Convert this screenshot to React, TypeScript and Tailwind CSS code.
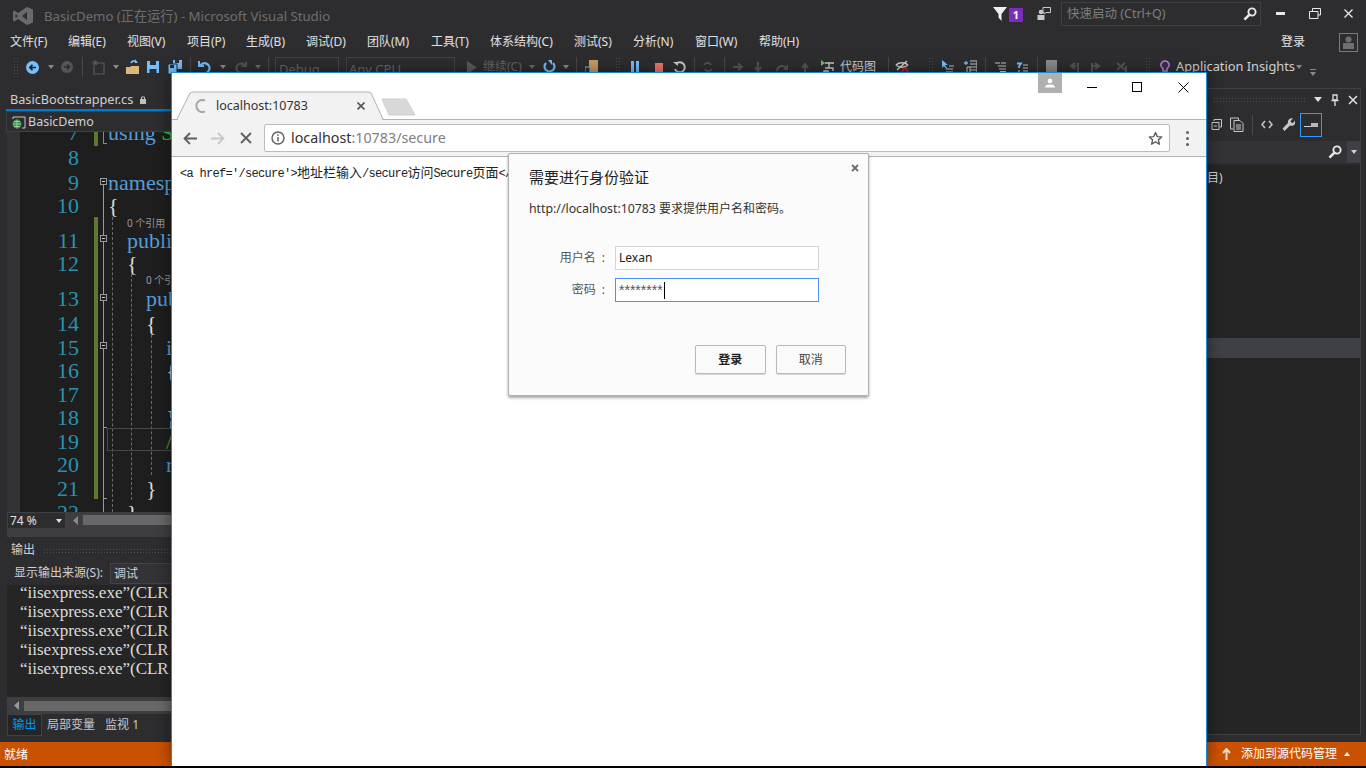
import React from "react";

const Ic = ({ c, v, children }: { c: string; v: string; children: React.ReactNode }) => (
  <svg className={"flex-none " + c} viewBox={v} fill="none">{children}</svg>
);
const Tri = ({ c, f = "#8a8a8a", up }: { c: string; f?: string; up?: boolean }) => (
  <svg className={"flex-none w-[6px] h-[4px] " + c} viewBox="0 0 6 4"><polygon points={up ? "0,4 6,4 3,0" : "0,0 6,0 3,4"} fill={f} /></svg>
);
const Sep = ({ c }: { c: string }) => <div className={"flex-none w-px h-[20px] bg-[#47474b] " + c} />;
const Grip = ({ c }: { c: string }) => (
  <div className={"flex-none w-[5px] h-[20px] bg-[radial-gradient(circle,#4e4e52_0.8px,transparent_1px)] bg-[length:3px_3px] " + c} />
);
const Under = ({ c }: { c: string }) => <div className={"flex-none self-end w-[6px] h-[2px] mb-[0px] bg-[#8a8a8a] " + c} />;

const Mag = ({ c }: { c: string }) => (
  <Ic c={c} v="0 0 14 14">
    <circle cx="9" cy="5" r="3.6" stroke="#e8e8e8" strokeWidth="1.9" />
    <path d="M6.2 7.8 1.4 12.6" stroke="#e8e8e8" strokeWidth="2.6" />
  </Ic>
);

const Toolbar = () => (
  <div className="flex items-start h-[36px] pt-[3px] flex-none">
    <div className="flex items-center h-[20px] text-[13px] whitespace-nowrap">
      <Grip c="ml-[13px]" />
      <Ic c="w-[13px] h-[13px] ml-[8px]" v="0 0 13 13"><circle cx="6.5" cy="6.5" r="6.5" fill="#75beff" /><path d="M10 6.5H4M6.5 3.8 3.8 6.5l2.7 2.7" stroke="#1e1e1e" strokeWidth="1.7" /></Ic>
      <Tri c="ml-[9px]" />
      <Ic c="w-[12px] h-[12px] ml-[7px]" v="0 0 13 13"><circle cx="6.5" cy="6.5" r="6.5" fill="#555558" /><path d="M3 6.5h6M6.5 3.8l2.7 2.7-2.7 2.7" stroke="#2d2d30" strokeWidth="1.7" /></Ic>
      <Sep c="ml-[9px]" />
      <Ic c="w-[14px] h-[15px] ml-[8px]" v="0 0 14 15"><path d="M5 3h8v11H3V6" stroke="#5a5a5d" strokeWidth="1.2" /><path d="M4 0v6M1 3h6M2 1l4 4M6 1 2 5" stroke="#5a5a5d" /></Ic>
      <Tri c="ml-[8px]" />
      <Ic c="w-[15px] h-[16px] ml-[6px]" v="0 0 15 16"><path d="M1 8h4l1-1h8v8H1z" fill="#dcb67a" /><path d="M6 4a3 3 0 0 1 5-1" stroke="#75beff" strokeWidth="1.8" /><path d="M10 0v4h3" fill="#75beff" /></Ic>
      <Ic c="w-[12px] h-[12px] ml-[7px]" v="0 0 12 12"><path d="M0 0h12v12H0z" fill="#75beff" /><path d="M3 0h6v4H3zM2.5 8h7v4h-7z" fill="#2d2d30" /></Ic>
      <Ic c="w-[14px] h-[14px] ml-[9px]" v="0 0 14 14"><path d="M5 0h9v9H5z" fill="#75beff" /><path d="M7 0h4v3H7z" fill="#2d2d30" /><path d="M0 4h9v10H0z" fill="#75beff" stroke="#2d2d30" /><path d="M2 5h4v3H2z" fill="#2d2d30" /></Ic>
      <Sep c="ml-[8px]" />
      <Ic c="w-[14px] h-[14px] ml-[7px]" v="0 0 14 14"><path d="M1 1v5h5" stroke="#75beff" strokeWidth="2" /><path d="M2 6a5 5 0 1 1 3 7" stroke="#75beff" strokeWidth="2.2" /></Ic>
      <Tri c="ml-[8px]" />
      <Ic c="w-[13px] h-[14px] ml-[8px]" v="0 0 14 14"><path d="M13 1v5H8" stroke="#555558" strokeWidth="2" /><path d="M12 6a5 5 0 1 0-3 7" stroke="#555558" strokeWidth="2.2" /></Ic>
      <Tri c="ml-[8px]" f="#6a6a6a" />
      <Sep c="ml-[7px]" />
      <div className="flex-none ml-[6px] w-[64px] h-[20px] border border-[#434346] pl-[3px] text-[#656565] leading-[22px]">Debug</div>
      <div className="flex-none ml-[7px] w-[109px] h-[20px] border border-[#434346] pl-[2px] text-[#656565] leading-[22px]">Any CPU</div>
      <Ic c="w-[10px] h-[13px] ml-[12px]" v="0 0 10 13"><path d="M0 0l10 6.5L0 13z" fill="#5a5a5d" /></Ic>
      <div className="flex-none ml-[6px] w-[39px] text-[#656565] text-[12px]">继续(C)</div>
      <Tri c="ml-[7px]" f="#6a6a6a" />
      <Ic c="w-[13px] h-[14px] ml-[8px]" v="0 0 13 14"><path d="M3 3a5 5 0 1 0 7 0" stroke="#75beff" strokeWidth="2.2" /><path d="M5 0h4v5z" fill="#75beff" /></Ic>
      <Tri c="ml-[7px]" />
      <Sep c="ml-[7px]" />
      <Ic c="w-[13px] h-[14px] ml-[8px]" v="0 0 13 14"><path d="M4 0h9v14H4z" fill="#c79b5f" /><path d="M0 7h5v7H0z" fill="#2d2d30" stroke="#75beff" /></Ic>
      <Under c="ml-[6px]" />
      <Grip c="ml-[5px]" />
      <Ic c="w-[8px] h-[12px] ml-[11px]" v="0 0 8 12"><path d="M0 0h3v12H0zM5 0h3v12H5z" fill="#75beff" /></Ic>
      <div className="flex-none w-[8px] h-[9px] ml-[16px] bg-[#e8776a]" />
      <Ic c="w-[13px] h-[13px] ml-[10px]" v="0 0 13 13"><path d="M3 3a5 5 0 1 1-1 5" stroke="#c8c8c8" strokeWidth="2" /><path d="M0 1h5v4z" fill="#c8c8c8" /></Ic>
      <Sep c="ml-[8px]" />
      <Ic c="w-[12px] h-[12px] ml-[7px]" v="0 0 12 12"><path d="M2 4a4 4 0 0 1 7 0M10 8a4 4 0 0 1-7 0" stroke="#555558" strokeWidth="1.8" /></Ic>
      <Sep c="ml-[10px]" />
      <Ic c="w-[10px] h-[10px] ml-[8px]" v="0 0 10 10"><path d="M0 5h8M5 1.500 9 5l-4 3.500" stroke="#555558" strokeWidth="2" /></Ic>
      <Ic c="w-[8px] h-[11px] ml-[11px]" v="0 0 8 11"><path d="M4 0v8M1 5l3 4 3-4" stroke="#555558" strokeWidth="2" /></Ic>
      <Ic c="w-[12px] h-[9px] ml-[14px]" v="0 0 12 9"><path d="M1 8a5 5 0 0 1 9-3" stroke="#555558" strokeWidth="2" /><path d="M12 1v6H7z" fill="#555558" /></Ic>
      <Ic c="w-[8px] h-[11px] ml-[13px]" v="0 0 8 11"><path d="M4 11V3M1 6l3-4 3 4" stroke="#555558" strokeWidth="2" /></Ic>
      <Ic c="w-[14px] h-[15px] ml-[12px]" v="0 0 14 15"><path d="M0 0l4 3-4 3z" fill="#6dbf65" /><path d="M4 3h9M8 3v5M4 8h8v3M3 11h4v4H3z" stroke="#c8c8c8" strokeWidth="1.4" /></Ic>
      <div className="flex-none ml-[5px] w-[36px] text-[#d0d0d0] text-[12px]">代码图</div>
      <Sep c="ml-[12px]" />
      <Ic c="w-[14px] h-[14px] ml-[6px]" v="0 0 14 14"><path d="M1 5c3-3 9-3 12 0M1 5c3 3 9 3 12 0M2 10 12 1" stroke="#c8c8c8" strokeWidth="1.6" /><circle cx="10" cy="11" r="2.500" stroke="#e51400" strokeWidth="1.500" /></Ic>
      <Under c="ml-[5px]" />
      <Grip c="ml-[8px]" />
      <Ic c="w-[12px] h-[14px] ml-[9px]" v="0 0 12 14"><path d="M0 0v8l2-2 2 3 1-1-2-3h3z" fill="#75beff" /><path d="M4 9h7M4 12h7M7 6h5" stroke="#c8c8c8" strokeWidth="1.200" /></Ic>
      <Ic c="w-[13px] h-[14px] ml-[10px]" v="0 0 13 14"><path d="M0 3h4M2 1v4" stroke="#75beff" strokeWidth="1.300" /><path d="M3 7v6h3V7zM6 1h7v12H6M6 4h7M6 7h7M6 10h7" stroke="#c8c8c8" /></Ic>
      <Sep c="ml-[8px]" />
      <Ic c="w-[11px] h-[10px] ml-[9px]" v="0 0 11 10"><path d="M0 1h5M3 4h8M4 7h7M5 9.500h6M6 1h5" stroke="#c8c8c8" strokeWidth="1.100" /></Ic>
      <Ic c="w-[12px] h-[11px] ml-[10px]" v="0 0 12 11"><path d="M1 1.500h4l-2 3V6" stroke="#75beff" strokeWidth="1.800" /><path d="M3 8v2M7 3h5M7 6h5M7 9h5" stroke="#c8c8c8" strokeWidth="1.200" /></Ic>
      <Sep c="ml-[9px]" />
      <div className="flex-none w-[11px] h-[14px] ml-[8px] bg-[#8a8a8c]" />
      <Ic c="w-[10px] h-[11px] ml-[13px]" v="0 0 10 11"><path d="M5 1 1 4l4 3M1 4h5M8 1v10" stroke="#555558" strokeWidth="2" /></Ic>
      <Ic c="w-[11px] h-[11px] ml-[10px]" v="0 0 11 11"><path d="M5 1l4 3-4 3M9 4H2M2 1v10" stroke="#555558" strokeWidth="2" /></Ic>
      <Ic c="w-[11px] h-[11px] ml-[15px]" v="0 0 11 11"><path d="M1 1l8 7M9 1 1 8M10 4v7" stroke="#555558" strokeWidth="2" /></Ic>
      <Under c="ml-[8px]" />
      <Grip c="ml-[4px]" />
      <Ic c="w-[10px] h-[15px] ml-[10px]" v="0 0 10 15"><path d="M5 1a4 4 0 0 1 2 7.500V11H3V8.500A4 4 0 0 1 5 1z" fill="#3c2a4a" stroke="#b180d7" strokeWidth="1.600" /><path d="M3 13h4" stroke="#b180d7" strokeWidth="1.500" /></Ic>
      <div className="flex-none ml-[6px] w-[114px] text-[#d0d0d0] text-[12.800px]">Application Insights</div>
      <Tri c="ml-[6px]" />
      <div className="flex-none ml-[7px] mt-[10px] w-[7px] flex flex-col gap-[2px] items-center">
        <div className="w-[6px] h-px bg-[#8a8a8a]" />
        <Tri c="" />
      </div>
    </div>
  </div>
);

const menu = [
  ["文件(F)", "w-[38px]", "ml-[10px]"],
  ["编辑(E)", "w-[38px]", "ml-[20px]"],
  ["视图(V)", "w-[38px]", "ml-[21px]"],
  ["项目(P)", "w-[38px]", "ml-[22px]"],
  ["生成(B)", "w-[38px]", "ml-[21px]"],
  ["调试(D)", "w-[41px]", "ml-[22px]"],
  ["团队(M)", "w-[44px]", "ml-[20px]"],
  ["工具(T)", "w-[39px]", "ml-[20px]"],
  ["体系结构(C)", "w-[64px]", "ml-[20px]"],
  ["测试(S)", "w-[39px]", "ml-[20px]"],
  ["分析(N)", "w-[42px]", "ml-[20px]"],
  ["窗口(W)", "w-[44px]", "ml-[20px]"],
  ["帮助(H)", "w-[41px]", "ml-[20px]"],
];

type Row = { h: string; n?: number; t?: React.ReactNode; p?: string; lens?: boolean };
const blue = "text-[#569cd6]";
const rows: Row[] = [
  { h: "h-[26px] -mt-[13px]", n: 7, p: "pl-[29px]", t: <><span className={blue}>using</span> <span className="text-[#2fc13c]">System</span></> },
  { h: "h-[25px]", n: 8 },
  { h: "h-[24px]", n: 9, p: "pl-[29px]", t: <span className={blue}>namespace</span> },
  { h: "h-[23px]", n: 10, p: "pl-[29px]", t: "{" },
  { h: "h-[12px]", lens: true, p: "pl-[48px]" },
  { h: "h-[23px]", n: 11, p: "pl-[48px]", t: <span className={blue}>public</span> },
  { h: "h-[22px]", n: 12, p: "pl-[48px]", t: "{" },
  { h: "h-[12px]", lens: true, p: "pl-[67px]" },
  { h: "h-[25px]", n: 13, p: "pl-[67px]", t: <span className={blue}>public</span> },
  { h: "h-[24px]", n: 14, p: "pl-[67px]", t: "{" },
  { h: "h-[24px]", n: 15, p: "pl-[87px]", t: <span className={blue}>if</span> },
  { h: "h-[23px]", n: 16, p: "pl-[87px]", t: "{" },
  { h: "h-[24px]", n: 17 },
  { h: "h-[23px]", n: 18, p: "pl-[87px]", t: "}" },
  { h: "h-[24px]", n: 19, p: "pl-[87px]", t: <span className="text-[#4f9e3c]">//</span> },
  { h: "h-[23px]", n: 20, p: "pl-[87px]", t: <span className={blue}>return</span> },
  { h: "h-[24px]", n: 21, p: "pl-[67px]", t: "}" },
  { h: "h-[24px]", n: 22, p: "pl-[48px]", t: "}" },
];

const Fold = ({ c }: { c: string }) => (
  <div className={"absolute left-[93px] w-[7px] h-[7px] border border-[#9a9a9a] bg-[#1e1e1e] flex items-center justify-center " + c}>
    <div className="w-[3px] h-px bg-[#c8c8c8]" />
  </div>
);

const Editor = () => (
  <div className="relative h-[380px] flex-none overflow-hidden bg-[#1e1e1e] ml-[7px] pl-[13px] font-['Liberation_Serif','Noto_Sans_CJK_SC',serif] text-[22px] text-[#dcdcdc]">
    {rows.map((r, i) => (
      <div key={i} className={"flex items-center whitespace-nowrap " + r.h}>
        <div className="w-[59px] flex-none text-right text-[#2b91af]">{r.n}</div>
        <div className={r.p}>
          {r.lens ? <span className="font-['Noto_Sans','Noto_Sans_CJK_SC',sans-serif] text-[10px] text-[#999] block">0 个引用</span> : r.t}
        </div>
      </div>
    ))}
    <div className="absolute left-[0px] top-[0px] w-[13px] h-full bg-[#333337]" />
    <div className="absolute left-[87px] top-[0px] w-[4px] h-[14px] bg-[#5a7a2e]" />
    <div className="absolute left-[87px] top-[85px] w-[4px] h-[282px] bg-[#5a7a2e]" />
    <div className="absolute left-[96px] top-[0px] w-[4px] h-[12px] border-l border-b border-[#8a8a8a]" />
    <div className="absolute left-[96px] top-[53px] w-px h-[327px] bg-[#9a9a9a]" />
    <div className="absolute left-[96px] top-[295px] w-[4px] h-px bg-[#9a9a9a]" />
    <div className="absolute left-[96px] top-[366px] w-[4px] h-px bg-[#9a9a9a]" />
    <Fold c="top-[46px]" />
    <Fold c="top-[103px]" />
    <Fold c="top-[162px]" />
    <Fold c="top-[210px]" />
    <div className="absolute left-[105px] top-[85px] h-[295px] border-l border-dashed border-[#6a6a6a]" />
    <div className="absolute left-[124px] top-[142px] h-[226px] border-l border-dashed border-[#6a6a6a]" />
    <div className="absolute left-[144px] top-[203px] h-[140px] border-l border-dashed border-[#6a6a6a]" />
    <div className="absolute left-[100px] top-[296px] w-[100px] h-[23px] border border-[#484848]" />
  </div>
);

const LeftCol = () => (
  <div className="w-[172px] flex-none flex flex-col overflow-hidden text-[12px]">
    <div className="h-[19px] flex items-center pl-[10px] text-[12.700px] text-[#d0d0d0] whitespace-nowrap flex-none">
      BasicBootstrapper.cs
      <svg className="w-[6px] h-[8px] ml-[7px]" viewBox="0 0 6 8"><path d="M0 3h6v5H0z" fill="#c0c0c0" /><path d="M1.500 3V1h3v2" stroke="#c0c0c0" fill="none" /></svg>
    </div>
    <div className="h-[2px] ml-[6px] bg-[#007acc] flex-none" />
    <div className="h-[21px] ml-[6px] flex-none flex items-center pl-[5px] pt-[1px] border border-[#3f3f46] text-[12.500px] text-[#d0d0d0]">
      <svg className="w-[14px] h-[13px] flex-none" viewBox="0 0 14 13"><path d="M1 3V1h12v11h-3" stroke="#c8c8c8" fill="none" /><circle cx="5" cy="8" r="4.500" fill="#3f8f4a" /><path d="M1 8h8M5 3.500v9M2 5.500h6M2 10.500h6" stroke="#c8e8c8" strokeWidth=".6" /></svg>
      <span className="ml-[2px]">BasicDemo</span>
    </div>
    <Editor />
    <div className="h-[25px] ml-[7px] flex-none flex bg-[#3e3e42]">
      <div className="w-[59px] h-[17px] flex items-center justify-between pl-[2px] pr-[3px] bg-[#2d2d30] border border-[#3f3f46] text-[#e0e0e0]">
        74 %<Tri c="" f="#e0e0e0" />
      </div>
      <svg className="w-[5px] h-[9px] ml-[7px] mt-[4px]" viewBox="0 0 5 9"><polygon points="5,0 5,9 0,4.500" fill="#888" /></svg>
      <div className="flex-1 h-[10px] mt-[3px] ml-[5px] bg-[#686868]" />
    </div>
    <div className="h-[20px] mt-[3px] flex-none flex items-center pl-[11px] ml-[0px] text-[#cfcfcf]">
      输出
      <div className="flex-1 ml-[8px] h-[5px] bg-[radial-gradient(circle,#4e4e52_0.8px,transparent_1px)] bg-[length:3px_3px]" />
    </div>
    <div className="h-[25px] ml-[7px] flex-none flex items-center pl-[7px] pt-[1px] text-[#d0d0d0] bg-[#2d2d30]">
      <span className="whitespace-nowrap">显示输出来源(S):</span>
      <div className="ml-[7px] flex-1 h-[21px] bg-[#333337] border border-[#434346] pl-[3px] leading-[19px]">调试</div>
    </div>
    <div className="h-[112px] ml-[7px] flex-none overflow-hidden bg-[#252526] pl-[13px] font-['Liberation_Serif','Noto_Sans_CJK_SC',serif] text-[17px] leading-[19px] text-[#dcdcdc] whitespace-nowrap">
      <div className="-mt-[2px]">
        {[0, 1, 2, 3, 4].map((k) => (
          <div key={k}>“iisexpress.exe”(CLR</div>
        ))}
      </div>
    </div>
    <div className="h-[17px] ml-[7px] flex-none flex items-center bg-[#3e3e42]">
      <svg className="w-[5px] h-[9px] ml-[7px]" viewBox="0 0 5 9"><polygon points="5,0 5,9 0,4.500" fill="#999" /></svg>
      <div className="flex-1 h-[10px] ml-[5px] bg-[#686868]" />
    </div>
    <div className="h-[22px] ml-[7px] flex-none flex items-center text-[#c8c8c8] whitespace-nowrap">
      <div className="w-[35px] h-[22px] flex items-center justify-center bg-[#252526] border border-[#3f3f46] text-[#0097fb]">输出</div>
      <span className="ml-[5px]">局部变量</span>
      <span className="ml-[10px]">监视 1</span>
    </div>
  </div>
);

const RightCol = () => (
  <div className="flex-1 -mt-[2px] pb-[7px] flex flex-col">
    <div className="flex-1 mr-[5px] border-r border-t border-b border-[#3f3f46] flex flex-col overflow-hidden">
      <div className="h-[20px] pt-[1px] flex-none flex items-center">
        <div className="w-[92px] ml-[7px] h-[5px] bg-[radial-gradient(circle,#4e4e52_0.8px,transparent_1px)] bg-[length:3px_3px]" />
        <svg className="w-[8px] h-[5px] ml-[9px]" viewBox="0 0 8 5"><polygon points="0,0 8,0 4,5" fill="#e0e0e0" /></svg>
        <svg className="w-[8px] h-[12px] ml-[9px]" viewBox="0 0 8 12"><path d="M2 1h4v5H2zM0.500 6.500h7M4 7v5" stroke="#e0e0e0" strokeWidth="1.300" fill="none" /></svg>
        <svg className="w-[10px] h-[10px] ml-[9px]" viewBox="0 0 10 10"><path d="M1 1l8 8M9 1 1 9" stroke="#e0e0e0" strokeWidth="1.500" /></svg>
      </div>
      <div className="h-[31px] flex-none flex items-center">
        <svg className="w-[11px] h-[11px] ml-[5px]" viewBox="0 0 11 11"><path d="M3 2V0.500h7.500V8H9M1 3.500h7v7H1zM3 7h3" stroke="#c8c8c8" fill="none" /></svg>
        <svg className="w-[14px] h-[15px] ml-[8px]" viewBox="0 0 14 15"><path d="M3 12H0.500V1h8v2M4 3.500h6l3 3v8H4zM6 8h5M6 10h5M6 12h5" stroke="#c8c8c8" fill="none" /></svg>
        <div className="w-px h-[20px] ml-[8px] bg-[#47474b]" />
        <svg className="w-[12px] h-[9px] ml-[8px]" viewBox="0 0 12 9"><path d="M4 1 1 4.500 4 8M8 1l3 3.500L8 8" stroke="#c8c8c8" strokeWidth="1.500" fill="none" /></svg>
        <svg className="w-[13px] h-[13px] ml-[9px]" viewBox="0 0 13 13"><path d="M0.500 10.500 6 5a3.800 3.800 0 0 1 5-4.500L8.500 3l.7 1.500L11 5l2-2.500a3.800 3.800 0 0 1-5 5L2.500 13z" fill="#c8c8c8" /></svg>
        <div className="w-[22px] h-[24px] ml-[5px] border border-[#3399ff] flex items-end justify-center pb-[9px]">
          <div className="w-[7px] h-px bg-[#d0d0d0]" />
          <div className="w-[7px] h-[4px] bg-[#b8b8b8]" />
        </div>
      </div>
      <div className="h-[24px] flex-none flex items-center justify-end bg-[#333337] border-y border-[#2d2d30]">
        <Mag c="w-[14px] h-[14px] mr-[5px]" />
        <div className="w-[13px] h-full bg-[#3f3f46] flex items-center justify-center"><Tri c="" f="#d0d0d0" /></div>
      </div>
      <div className="flex-1 mt-[1px] bg-[#252526] flex flex-col">
        <div className="h-[173px] flex-none pl-[1px] pt-[4px] text-[12px] text-[#d0d0d0]">目)</div>
        <div className="h-[20px] flex-none bg-[#3f3f46]" />
      </div>
    </div>
  </div>
);

const Dialog = () => (
  <div className="absolute left-[336px] top-[80px] w-[361px] h-[243px] bg-[#fbfbfb] border border-[#b0b0b0] rounded-[2px] shadow-[0_2px_3px_rgba(0,0,0,0.35)] pl-[20px] pr-[22px] pt-[12px] flex flex-col text-[#222]">
    <svg className="absolute right-[9px] top-[10px] w-[8px] h-[8px]" viewBox="0 0 8 8"><path d="M1 1l6 6M7 1 1 7" stroke="#6a6a6a" strokeWidth="1.800" /></svg>
    <div className="text-[15px] leading-[22px] h-[22px]">需要进行身份验证</div>
    <div className="text-[12px] leading-[16px] mt-[13px] text-[#333]"><span className="text-[12.300px]">http://localhost:10783</span> 要求提供用户名和密码。</div>
    <div className="mt-[29px] flex items-center h-[24px] ml-[18px]">
      <div className="w-[68px] pr-[10px] flex justify-end text-[12px] text-[#555]"><span>用户名</span><span className="ml-[6px]">:</span></div>
      <div className="w-[204px] h-[24px] bg-white border border-[#d4d4d4] pl-[3px] text-[12px] leading-[22px] text-[#222]">Lexan</div>
    </div>
    <div className="mt-[8px] flex items-center h-[24px] ml-[18px]">
      <div className="w-[68px] pr-[10px] flex justify-end text-[12px] text-[#555]"><span>密码</span><span className="ml-[6px]">:</span></div>
      <div className="w-[204px] h-[24px] bg-white border border-[#4d90fe] pl-[3px] flex items-center text-[13px] text-[#555]">
        <span className="font-['Liberation_Sans',sans-serif] text-[14px]">********</span>
        <div className="w-px h-[17px] ml-[1px] bg-black" />
      </div>
    </div>
    <div className="mt-[43px] ml-[166px] flex gap-[10px]">
      <div className="w-[71px] h-[29px] bg-[#fafafa] border border-[#b8b8b8] rounded-[2px] shadow-[0_1px_1px_rgba(0,0,0,0.15)] flex items-center justify-center text-[12px] font-bold text-[#222]">登录</div>
      <div className="w-[71px] h-[29px] bg-[#fafafa] border border-[#b8b8b8] rounded-[2px] shadow-[0_1px_1px_rgba(0,0,0,0.15)] flex items-center justify-center text-[12px] text-[#444]">取消</div>
    </div>
  </div>
);

const Chrome = () => (
  <div className="absolute left-[171px] top-[72px] w-[1036px] h-[694px] bg-white border-x border-t border-[#1a8ad4] flex flex-col shadow-[0_0_14px_rgba(0,0,0,0.45)] font-['Noto_Sans','Noto_Sans_CJK_SC',sans-serif]">
    {/* tab strip */}
    <div className="relative h-[47px] flex-none bg-white border-b border-[#b2b2b2]">
      <svg className="absolute left-[5px] top-[18px] w-[208px] h-[29px]" viewBox="0 0 208 29">
        <path d="M0 28 L13 2 Q14 1 16 1 H191 Q193 1 194 2 L206 28" fill="#f2f2f2" stroke="#b2b2b2" />
        <path d="M1 28.500H205" stroke="#f2f2f2" strokeWidth="2" />
      </svg>
      <svg className="absolute left-[209px] top-[25px] w-[35px] h-[18px]" viewBox="0 0 35 18"><path d="M1 1h24l9 16H8z" fill="#d8d8d8" stroke="#cfcfcf" strokeLinejoin="round" /></svg>
      <div className="absolute left-[21px] top-[25px] h-[16px] flex items-center">
        <svg className="w-[14px] h-[14px]" viewBox="0 0 14 14"><path d="M12 1.600A6 6 0 1 0 12 12.400" stroke="#a8a8a8" strokeWidth="2" fill="none" /></svg>
        <span className="ml-[9px] text-[12.500px] text-[#333] whitespace-nowrap">localhost:10783</span>
      </div>
      <svg className="absolute left-[185px] top-[29px] w-[8px] h-[8px]" viewBox="0 0 8 8"><path d="M0.500 0.500l7 7M7.500 0.500l-7 7" stroke="#555" strokeWidth="1.600" /></svg>
      <div className="absolute left-[866px] top-[0px] w-[24px] h-[20px] bg-[#b0b0b0] flex items-center justify-center">
        <svg className="w-[10px] h-[10px]" viewBox="0 0 10 10"><circle cx="5" cy="3" r="2.300" fill="#fff" /><path d="M0 9.500c0-2 2-3 5-3s5 1 5 3z" fill="#fff" /></svg>
      </div>
      <div className="absolute left-[915px] top-[14px] w-[10px] h-px bg-black" />
      <div className="absolute left-[960px] top-[9px] w-[10px] h-[10px] border border-black" />
      <svg className="absolute left-[1006px] top-[9px] w-[11px] h-[11px]" viewBox="0 0 11 11"><path d="M0.500 0.500l10 10M10.500 0.500l-10 10" stroke="#000" /></svg>
    </div>
    {/* toolbar */}
    <div className="h-[37px] flex-none bg-[#f2f2f2] border-b border-[#b2b2b2] flex items-center">
      <svg className="w-[14px] h-[13px] ml-[11px]" viewBox="0 0 14 13"><path d="M14 6.500H2M7 1 1.500 6.500 7 12" stroke="#5f5f5f" strokeWidth="1.800" fill="none" /></svg>
      <svg className="w-[14px] h-[13px] ml-[14px]" viewBox="0 0 14 13"><path d="M0 6.500h12M7 1l5.500 5.500L7 12" stroke="#c8c8c8" strokeWidth="1.800" fill="none" /></svg>
      <svg className="w-[12px] h-[12px] ml-[15px]" viewBox="0 0 12 12"><path d="M1 1l10 10M11 1 1 11" stroke="#5f5f5f" strokeWidth="1.800" /></svg>
      <div className="w-[906px] h-[28px] ml-[12px] bg-white border border-[#bcbcbc] rounded-[2px] flex items-center pl-[6px]">
        <svg className="w-[14px] h-[14px] flex-none" viewBox="0 0 14 14"><circle cx="7" cy="7" r="6" stroke="#5f5f5f" strokeWidth="1.400" fill="none" /><path d="M7 6v4.500" stroke="#5f5f5f" strokeWidth="1.500" /><path d="M7 3.200v1.600" stroke="#5f5f5f" strokeWidth="1.500" /></svg>
        <span className="ml-[6px] text-[14.300px] text-[#333] whitespace-nowrap">localhost<span className="text-[#808080]">:10783/secure</span></span>
        <svg className="w-[15px] h-[15px] ml-auto mr-[6px] flex-none" viewBox="0 0 15 15"><path d="M7.500 1.500 9.300 5.600l4.400.4-3.300 2.900 1 4.300-3.900-2.300-3.900 2.300 1-4.300L1.300 6l4.400-.4z" stroke="#5f5f5f" strokeWidth="1.400" fill="none" strokeLinejoin="round" /></svg>
      </div>
      <div className="ml-[16px] flex flex-col gap-[3px]">
        <div className="w-[3px] h-[3px] rounded-full bg-[#5f5f5f]" />
        <div className="w-[3px] h-[3px] rounded-full bg-[#5f5f5f]" />
        <div className="w-[3px] h-[3px] rounded-full bg-[#5f5f5f]" />
      </div>
    </div>
    {/* page */}
    <div className="flex-1 bg-white pl-[8px] pt-[9px] text-[13px] leading-[15px] font-['Liberation_Mono','Noto_Sans_CJK_SC',monospace] text-[#222] whitespace-nowrap overflow-hidden">
      <span className="text-[12px] tracking-[-0.7px]">&lt;a href='/secure'&gt;</span>地址栏输入<span className="text-[12px] tracking-[-0.7px]">/secure</span>访问<span className="text-[12px] tracking-[-0.7px]">Secure</span>页面<span className="text-[12px] tracking-[-0.7px]">&lt;/a&gt;</span>
    </div>
    <Dialog />
  </div>
);

export default function App() {
  return (
    <div className="relative w-[1366px] h-[768px] overflow-hidden bg-[#2d2d30] flex flex-col font-['Noto_Sans','Noto_Sans_CJK_SC',sans-serif] text-[#d0d0d0]">
      {/* title bar */}
      <div className="h-[30px] flex-none flex items-center">
        <svg className="w-[20px] h-[18px] ml-[13px] mt-[1px] flex-none" viewBox="0 0 20 18"><path fillRule="evenodd" d="M14 0l6 2.500v13L14 18l-9-6-3.500 2.500L0 13.500v-9L1.500 3.500 5 6zM14 5 9 9l5 4zM2.500 7v4L5 9z" fill="#69696c" /></svg>
        <div className="ml-[11px] mt-[3px] text-[13.200px] text-[#6d6d6f] whitespace-nowrap">BasicDemo (正在运行) - Microsoft Visual Studio</div>
        <div className="ml-auto flex items-center">
          <svg className="w-[14px] h-[14px] -mt-[3px]" viewBox="0 0 14 14"><path d="M0 0h14L8.500 7v7l-3-3.500V7z" fill="#f0f0f0" /></svg>
          <div className="ml-[2px] -mt-[1px] w-[14px] h-[14px] bg-[#7a2db8] text-white text-[11px] font-bold leading-[14px] text-center">1</div>
          <svg className="ml-[14px] -mt-[3px] w-[14px] h-[14px]" viewBox="0 0 14 14"><circle cx="4" cy="5" r="2.300" fill="#c8c8c8" /><path d="M0.500 8h7v5h-7z" fill="#c8c8c8" /><path d="M6 0.500h7.500v5H9L7 7V5.500H6z" stroke="#c8c8c8" fill="#2d2d30" /></svg>
          <div className="ml-[10px] -mt-[3px] w-[200px] h-[24px] border border-[#3f3f46] flex items-center pl-[5px] pr-[3px] text-[12.500px] text-[#7f7f7f]">
            <span className="mt-[2px]">快速启动 (Ctrl+Q)</span>
            <Mag c="w-[14px] h-[14px] ml-auto" />
          </div>
          <div className="ml-[15px] w-[9px] h-[3px] -mt-[3px] bg-[#e8e8e8]" />
          <svg className="ml-[24px] -mt-[3px] w-[12px] h-[11px]" viewBox="0 0 12 11"><path d="M3.500 3V.500h8V7H9M.500 3.500H9v7H.500z" stroke="#e8e8e8" fill="none" /></svg>
          <svg className="ml-[23px] mr-[13px] -mt-[3px] w-[9px] h-[9px]" viewBox="0 0 9 9"><path d="M.500.500l8 8M8.500.500l-8 8" stroke="#e8e8e8" strokeWidth="1.300" /></svg>
        </div>
      </div>
      {/* menu */}
      <div className="h-[24px] flex-none flex items-center text-[12px] text-[#e0e0e0] whitespace-nowrap">
        {menu.map(([t, w, m]) => (
          <div key={t} className={"flex-none " + w + " " + m}>{t}</div>
        ))}
        <div className="ml-auto text-[12px] text-[#e8e8e8]">登录</div>
        <div className="ml-[34px] mr-[8px] w-[19px] h-[19px] border border-[#7a7a7a] flex items-center justify-center">
          <svg className="w-[13px] h-[13px]" viewBox="0 0 13 13"><circle cx="6.500" cy="3.500" r="3" fill="#6f6f72" /><path d="M1 7h11v6H1z" fill="#6f6f72" /></svg>
        </div>
      </div>
      <Toolbar />
      {/* workspace */}
      <div className="h-[652px] flex-none flex">
        <LeftCol />
        <div className="w-[1034px] flex-none" />
        <RightCol />
      </div>
      {/* status */}
      <div className="h-[24px] flex-none bg-[#ca5100] flex items-center text-[12px] text-white pl-[4px]">
        <span className="mt-[1px]">就绪</span>
        <svg className="ml-auto w-[9px] h-[12px]" viewBox="0 0 9 12"><path d="M4.500 12V2M1 5l3.500-4L8 5" stroke="#e8d8c8" strokeWidth="2" fill="none" /></svg>
        <span className="ml-[10px]">添加到源代码管理</span>
        <Tri c="ml-[6px] mr-[15px] !w-[8px]" f="#fff" up />
      </div>
      <div className="h-[2px] flex-none bg-black" />
      <Chrome />
    </div>
  );
}
